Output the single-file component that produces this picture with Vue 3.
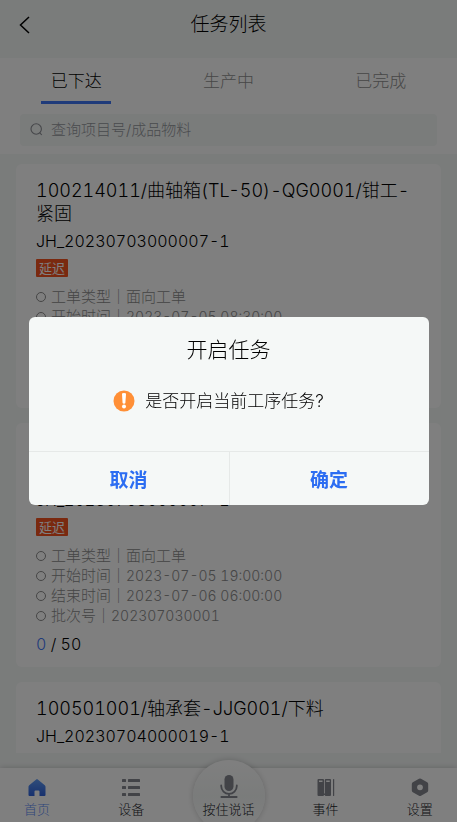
<script setup>
import { ref } from 'vue'

const tabs = ['已下达', '生产中', '已完成']
const activeTab = ref(0)
const keyword = ref('')
const dialogOpen = ref(true)

const tasks = [
  {
    title: '100214011/曲轴箱(TL-50)-QG0001/钳工-紧固',
    plan: 'JH_20230703000007-1',
    type: '面向工单',
    rows: [
      ['开始时间', '2023-07-05 08:30:00'],
      ['结束时间', '2023-07-05 19:00:00'],
      ['批次号', '202307030001'],
    ],
    done: 0,
    total: 50,
  },
  {
    title: '100214011/曲轴箱(TL-50)-QG0001/钳工-紧固',
    plan: 'JH_20230703000007-1',
    type: '面向工单',
    rows: [
      ['开始时间', '2023-07-05 19:00:00'],
      ['结束时间', '2023-07-06 06:00:00'],
      ['批次号', '202307030001'],
    ],
    done: 0,
    total: 50,
  },
  {
    title: '100501001/轴承套-JJG001/下料',
    plan: 'JH_20230704000019-1',
    type: '面向工单',
    rows: [
      ['开始时间', '2023-07-06 08:30:00'],
      ['结束时间', '2023-07-06 19:00:00'],
      ['批次号', '202307040001'],
    ],
    done: 0,
    total: 50,
  },
]
</script>

<template>
  <div class="page">
    <header class="header">
      <button class="back" type="button" aria-label="返回">
        <svg width="12" height="18" viewBox="0 0 12 18" fill="none" stroke="#000" stroke-width="1.5">
          <path d="M10 1 L1.5 9 L10 17" />
        </svg>
      </button>
      <h1>任务列表</h1>
    </header>

    <section class="filters">
      <nav class="tabs">
        <button
          v-for="(tab, i) in tabs"
          :key="tab"
          type="button"
          class="tab"
          :class="{ active: i === activeTab }"
          @click="activeTab = i"
        >{{ tab }}</button>
      </nav>
      <label class="search">
        <svg width="13" height="13" viewBox="0 0 13 13" fill="none" stroke="#8c8f94" stroke-width="1.1">
          <circle cx="6.2" cy="6" r="5.2" />
          <path d="M9.6 9.6 L11.8 12" />
        </svg>
        <input v-model="keyword" type="text" aria-label="查询" placeholder="查询项目号/成品物料" />
      </label>
    </section>

    <main class="list">
      <article v-for="(task, i) in tasks" :key="i" class="card">
        <h2>{{ task.title }}</h2>
        <p class="plan">{{ task.plan }}</p>
        <span class="badge">延迟</span>
        <ul>
          <li><i class="ring"></i><span>工单类型｜{{ task.type }}</span></li>
          <li v-for="row in task.rows" :key="row[0]">
            <i class="ring"></i><span>{{ row[0] }}｜<span class="num">{{ row[1] }}</span></span>
          </li>
        </ul>
        <p class="count"><b>{{ task.done }}</b> / {{ task.total }}</p>
      </article>
    </main>

    <footer class="bar">
      <a href="#home" class="item current">
        <svg width="20" height="20" viewBox="0 0 20 20">
          <defs>
            <linearGradient id="homeFill" x1="0" y1="0" x2="0" y2="1">
              <stop offset="0" stop-color="#5f9bf5" />
              <stop offset="1" stop-color="#2f62dc" />
            </linearGradient>
          </defs>
          <path fill="url(#homeFill)" d="M9.2 1.4 Q10 .8 10.8 1.4 L17.8 7.2 Q18.5 7.8 18.5 8.7 V17 Q18.5 18 17.5 18 H12.5 V13.5 Q12.5 12.5 11.5 12.5 H8.5 Q7.5 12.5 7.5 13.5 V18 H2.5 Q1.5 18 1.5 17 V8.7 Q1.5 7.8 2.2 7.2 Z" />
        </svg>
        <span>首页</span>
      </a>
      <a href="#device" class="item">
        <svg width="20" height="20" viewBox="0 0 20 20" fill="#84868f">
          <rect x="1" y="1" width="4" height="3" rx=".6" /><rect x="7" y="1" width="12" height="3" rx=".6" />
          <rect x="1" y="8" width="4" height="3" rx=".6" /><rect x="7" y="8" width="12" height="3" rx=".6" />
          <rect x="1" y="15" width="4" height="3" rx=".6" /><rect x="7" y="15" width="12" height="3" rx=".6" />
        </svg>
        <span>设备</span>
      </a>
      <button type="button" class="item talk">
        <svg width="20" height="24" viewBox="0 0 20 24">
          <rect x="5.5" y="0" width="9" height="16" rx="4.5" fill="#84868f" />
          <path d="M2.2 10.5 V11 A7.8 7.8 0 0 0 17.8 11 V10.5 M10 18.8 V22" fill="none" stroke="#84868f" stroke-width="1.8" stroke-linecap="round" />
          <rect x="1.5" y="21" width="17" height="2" rx=".8" fill="#84868f" />
        </svg>
        <span>按住说话</span>
      </button>
      <a href="#event" class="item">
        <svg width="20" height="20" viewBox="0 0 20 20" fill="#84868f">
          <path fill-rule="evenodd" d="M2.5 1 H7 Q8 1 8 2 V17 Q8 18 7 18 H2.5 Q1.5 18 1.5 17 V2 Q1.5 1 2.5 1 Z M3 2.5 V4 H6.5 V2.5 Z" />
          <path fill-rule="evenodd" d="M9.8 1 H14 Q15 1 15 2 V17 Q15 18 14 18 H9.8 Q8.8 18 8.8 17 V2 Q8.8 1 9.8 1 Z M10.2 2.5 V4 H13.7 V2.5 Z" />
          <rect x="7.5" y="15.5" width="2" height="1.5" />
          <rect x="17" y="1" width="1.2" height="17" rx=".5" />
        </svg>
        <span>事件</span>
      </a>
      <a href="#settings" class="item">
        <svg width="20" height="20" viewBox="0 0 20 20">
          <path fill="#84868f" fill-rule="evenodd" d="M9 .8 Q10 .2 11 .8 L17.2 4.3 Q18.2 4.9 18.2 6 V12.6 Q18.2 13.7 17.2 14.3 L11 17.8 Q10 18.4 9 17.8 L2.8 14.3 Q1.8 13.7 1.8 12.6 V6 Q1.8 4.9 2.8 4.3 Z M10 6.4 A2.9 2.9 0 1 0 10 12.2 A2.9 2.9 0 1 0 10 6.4 Z" />
        </svg>
        <span>设置</span>
      </a>
    </footer>

    <div v-if="dialogOpen" class="mask">
      <div class="dialog" role="dialog" aria-labelledby="dialog-title">
        <h3 id="dialog-title">开启任务</h3>
        <p class="message">
          <svg width="22" height="22" viewBox="0 0 22 22">
            <circle cx="11" cy="11" r="10.5" fill="#ff8f36" />
            <path d="M9 3.8 Q9 3 11 3 Q13 3 13 3.8 L12.4 13 Q12.3 13.8 11 13.8 Q9.7 13.8 9.6 13 Z" fill="#fff" />
            <circle cx="11" cy="16.6" r="2" fill="#fff" />
          </svg>
          <span>是否开启当前工序任务?</span>
        </p>
        <div class="actions">
          <button type="button" @click="dialogOpen = false">取消</button>
          <button type="button" @click="dialogOpen = false">确定</button>
        </div>
      </div>
    </div>
  </div>
</template>

<style>
body {
  margin: 0;
  background: #f5f8f7;
}
</style>

<style scoped>
.page {
  display: flex;
  flex-direction: column;
  height: 100vh;
  overflow: hidden;
  background: #f5f8f7;
  color: #000;
  font-family: Inter, "Noto Sans CJK SC", sans-serif;
  font-weight: 300;
}
.page * {
  box-sizing: border-box;
}
h1, h2, h3, p, ul {
  margin: 0;
  padding: 0;
  font-weight: inherit;
}
button, input {
  margin: 0;
  padding: 0;
  border: 0;
  background: none;
  color: inherit;
  font: inherit;
}
svg {
  display: block;
  flex: none;
}

.header {
  display: grid;
  grid-template-columns: 30px 1fr 30px;
  align-items: center;
  height: 58px;
  padding: 0 10px 8px;
}
.back {
  display: flex;
  justify-content: center;
}
h1 {
  text-align: center;
  font-size: 19px;
  line-height: 28px;
}

.filters {
  padding-bottom: 8px;
  background: #fff;
}
.tabs {
  display: grid;
  grid-template-columns: 1fr 1fr 1fr;
  justify-items: center;
  margin-bottom: 10px;
}
.tab {
  width: 70px;
  height: 46px;
  padding-top: 4px;
  border-bottom: 3px solid transparent;
  color: #8f8f8f;
  font-size: 17px;
  line-height: 39px;
}
.tab.active {
  border-color: #3f76f5;
  color: #000;
}
.search {
  display: flex;
  align-items: center;
  gap: 8px;
  height: 32px;
  margin: 0 20px;
  padding: 0 10px 2px;
  border-radius: 4px;
  background: #f5f8f7;
}
.search input {
  flex: 1;
  min-width: 0;
  outline: none;
  font-size: 15px;
}
.search input::placeholder {
  color: #94979c;
  opacity: 1;
}

.list {
  flex: 1;
  min-height: 0;
  display: flex;
  flex-direction: column;
  gap: 15px;
  margin: 10px 16px 15px;
  overflow-y: auto;
  scrollbar-width: none;
}
.card {
  flex: none;
  padding: 15px 20px 12px;
  border-radius: 6px;
  background: #fff;
  font-variant-numeric: tabular-nums;
}
h2 {
  font-size: 18px;
  line-height: 23px;
}
.plan {
  margin-top: 3px;
  font-size: 16px;
  line-height: 26px;
}
.badge {
  display: block;
  width: 32px;
  margin: 5px 0 10px;
  border-radius: 1px;
  background: #f5521f;
  color: #fff;
  font-size: 13px;
  font-weight: 400;
  line-height: 18px;
  text-align: center;
}
ul {
  list-style: none;
}
li {
  display: flex;
  align-items: center;
  gap: 5px;
  height: 20px;
  color: #8c8c8c;
  font-size: 15px;
  line-height: 20px;
}
.num {
  font-size: 14px;
}
.ring {
  width: 10px;
  height: 10px;
  border: 1px solid #8c8c8c;
  border-radius: 50%;
}
.count {
  height: 22px;
  margin-top: 7px;
  font-size: 16px;
  line-height: 22px;
}
.count b {
  color: #3f76f5;
  font-weight: inherit;
}

.bar {
  display: grid;
  grid-template-columns: 1fr 1fr 80px 1fr 1fr;
  column-gap: 20px;
  height: 54px;
  background: #fff;
  box-shadow: 0 0 6px rgba(0, 0, 0, 0.2);
}
.item {
  display: flex;
  flex-direction: column;
  align-items: center;
  gap: 2px;
  padding-top: 10px;
  color: #22232a;
  font-size: 13px;
  line-height: 18px;
  text-decoration: none;
  white-space: nowrap;
}
.item.current {
  color: #5f8ef6;
}
.talk {
  justify-self: center;
  width: 72px;
  height: 72px;
  margin-top: -8px;
  padding-top: 15px;
  gap: 1px;
  border-radius: 50%;
  background: linear-gradient(#fff, #f5f8f7 50%, #fff);
  box-shadow: 0 0 6px rgba(0, 0, 0, 0.2);
}

.mask {
  position: fixed;
  inset: 0;
  display: flex;
  align-items: center;
  justify-content: center;
  padding: 0 28px;
  background: rgba(0, 0, 0, 0.5);
}
.dialog {
  width: 100%;
  max-width: 400px;
  border-radius: 6px;
  background: #f5f8f7;
  overflow: hidden;
}
h3 {
  padding-top: 18px;
  font-size: 21px;
  line-height: 30px;
  text-align: center;
}
.message {
  display: flex;
  align-items: center;
  justify-content: center;
  gap: 10px;
  padding: 24px 40px 38px 20px;
  font-size: 17px;
  line-height: 24px;
}
.actions {
  display: grid;
  grid-template-columns: 1fr 1fr;
  border-top: 1px solid #e6e9e8;
}
.actions button {
  height: 53px;
  color: #2c6df2;
  font-size: 19px;
  font-weight: 700;
}
.actions button + button {
  border-left: 1px solid #e6e9e8;
}
</style>
